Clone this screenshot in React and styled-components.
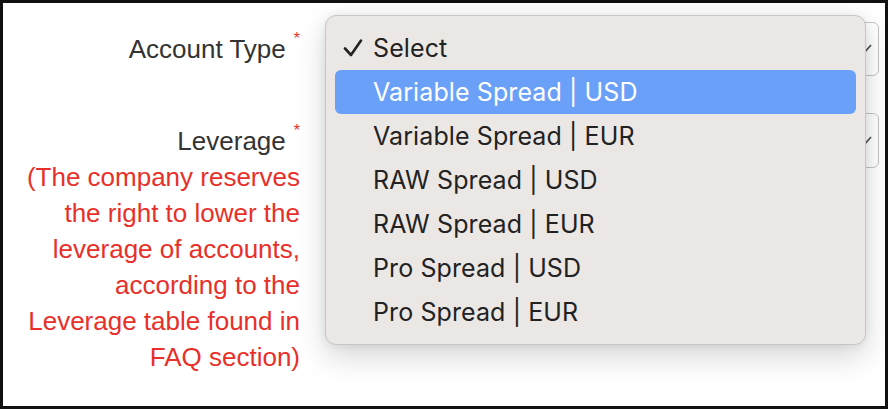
import React from 'react';
import styled, { createGlobalStyle } from 'styled-components';

const GlobalStyle = createGlobalStyle`
  html, body {
    margin: 0;
    padding: 0;
    background: #fff;
  }
`;

const Frame = styled.div`
  position: relative;
  box-sizing: border-box;
  width: 888px;
  height: 409px;
  border: 3px solid #111;
  background: #fff;
  overflow: hidden;
`;

const Form = styled.div`
  display: grid;
  grid-template-columns: 297px 549px;
  column-gap: 30px;
  row-gap: 37px;
  padding-top: 19px;
  font-family: "Liberation Sans", Arial, sans-serif;
`;

const Label = styled.div`
  align-self: ${(p) => (p.$center ? 'center' : 'start')};
  padding-top: ${(p) => p.$pad || 0}px;
  text-align: right;
  font-size: 26px;
  line-height: 36px;
  color: #333;
`;

const Star = styled.span`
  display: inline-block;
  vertical-align: top;
  margin-left: 8px;
  line-height: 16px;
  font-size: 16px;
  color: #e8302a;
`;

const Note = styled.span`
  display: block;
  color: #e8302a;
`;

const SelectBox = styled.div`
  box-sizing: border-box;
  height: ${(p) => p.$h}px;
  display: flex;
  align-items: center;
  justify-content: flex-end;
  padding-right: 6px;
  border: 1.5px solid #c4c4c4;
  border-radius: 6px;
  background: #fff;
`;

const Menu = styled.div`
  position: absolute;
  left: 322px;
  top: 12px;
  box-sizing: border-box;
  width: 541px;
  padding: 10px 9px;
  border: 1px solid #c9c5c2;
  border-radius: 11px;
  background: #ebe7e4;
  box-shadow: 0 12px 30px rgba(0, 0, 0, 0.16), 0 0 10px rgba(0, 0, 0, 0.08);
  font-family: Inter, "Noto Sans", sans-serif;
`;

const Item = styled.div`
  height: 44px;
  display: flex;
  align-items: center;
  border-radius: 6px;
  font-size: 25px;
  letter-spacing: 0.1px;
  color: ${(p) => (p.$active ? '#fff' : '#222')};
  background: ${(p) => (p.$active ? '#6aa0f8' : 'transparent')};
`;

const CheckSlot = styled.span`
  width: 38px;
  display: flex;
  justify-content: flex-start;
  padding-left: 8px;
  box-sizing: border-box;
`;

const options = [
  'Select',
  'Variable Spread | USD',
  'Variable Spread | EUR',
  'RAW Spread | USD',
  'RAW Spread | EUR',
  'Pro Spread | USD',
  'Pro Spread | EUR',
];

const ChevronIcon = () => (
  <svg width="16" height="12" viewBox="0 0 16 12">
    <polyline points="1,2 8,10 15,2" fill="none" stroke="#555" strokeWidth="1.8" />
  </svg>
);

const CheckIcon = () => (
  <svg width="20" height="18" viewBox="0 0 20 18">
    <polyline
      points="2,9.5 8,16 18,1.5"
      fill="none"
      stroke="#222"
      strokeWidth="2.6"
      strokeLinecap="round"
      strokeLinejoin="round"
    />
  </svg>
);

const App = () => {
  return (
    <Frame>
      <GlobalStyle />
      <Form>
        <Label $center>
          Account Type<Star>*</Star>
        </Label>
        <SelectBox $h={54}>
          <ChevronIcon />
        </SelectBox>
        <Label $pad={10}>
          Leverage<Star>*</Star>
          <Note>
            (The company reserves the right to lower the leverage of accounts,
            according to the Leverage table found in FAQ section)
          </Note>
        </Label>
        <SelectBox $h={55}>
          <ChevronIcon />
        </SelectBox>
      </Form>
      <Menu>
        {options.map((opt, i) => (
          <Item key={opt} $active={i === 1}>
            <CheckSlot>{i === 0 ? <CheckIcon /> : null}</CheckSlot>
            {opt}
          </Item>
        ))}
      </Menu>
    </Frame>
  );
};

export default App;
